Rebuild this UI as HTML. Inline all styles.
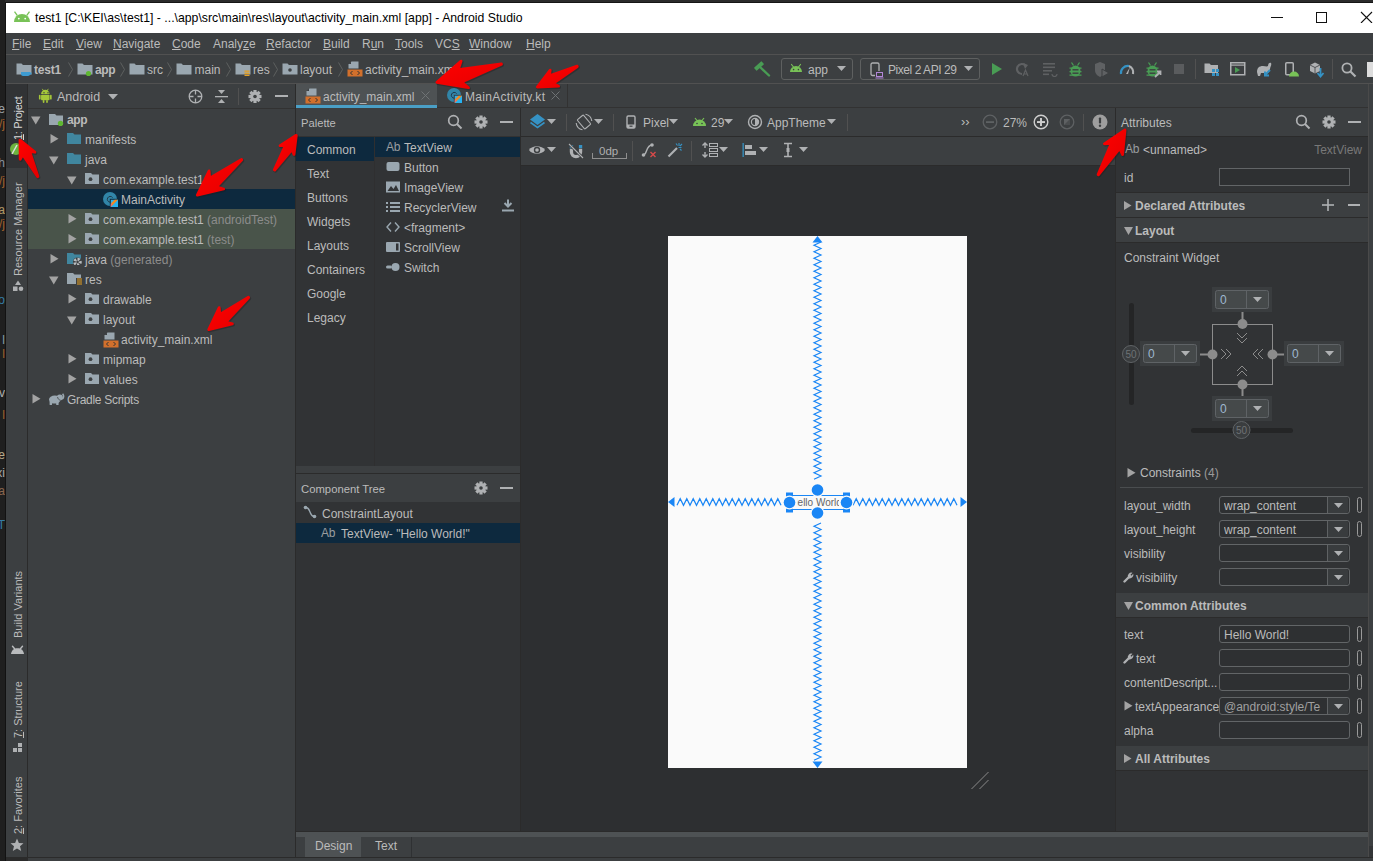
<!DOCTYPE html>
<html><head><meta charset="utf-8"><title>Android Studio</title>
<style>
html,body{margin:0;padding:0;width:1373px;height:861px;overflow:hidden;background:#2b2b2b}
body{position:relative;font-family:"Liberation Sans",sans-serif}
body>div,body>svg{position:absolute;box-sizing:content-box}
.t{white-space:nowrap}
u{text-decoration:underline;text-decoration-thickness:1px;text-underline-offset:1px}
</style></head><body>
<div style="left:0px;top:0px;width:1373px;height:861px;background:#2b2b2b;"></div>
<div style="left:5px;top:2px;width:1368px;height:1px;background:#151515;"></div>
<div style="left:5px;top:2px;width:1px;height:859px;background:#121212;"></div>
<div style="left:6px;top:3px;width:1367px;height:30px;background:#ffffff;"></div>
<svg style="left:13px;top:10px;" width="18" height="13" viewBox="0 0 18 13"><g fill="#78c257"><path d="M1,12 A8,8 0 0 1 17,12 Z"/><rect x="2.5" y="1.2" width="1.3" height="5" transform="rotate(-35 3 4)"/><rect x="14.2" y="1.2" width="1.3" height="5" transform="rotate(35 15 4)"/></g><circle cx="5.8" cy="8.6" r="0.9" fill="#fff"/><circle cx="12.2" cy="8.6" r="0.9" fill="#fff"/></svg>
<div class="t" style="left:35px;top:9.5px;font-size:12.25px;line-height:16px;color:#000000;font-weight:normal;">test1 [C:\KEI\as\test1] - ...\app\src\main\res\layout\activity_main.xml [app] - Android Studio</div>
<div style="left:1271px;top:17px;width:12px;height:1px;background:#111;"></div>
<div style="left:1316px;top:12px;width:9px;height:9px;border:1px solid #111"></div>
<svg style="left:1360px;top:11px;" width="13" height="12" viewBox="0 0 13 12"><path d="M1,1 L12,12 M12,1 L1,12" stroke="#111" stroke-width="1.1"/></svg>
<div style="left:6px;top:33px;width:1367px;height:21px;background:#3c3f41;"></div>
<div style="left:6px;top:54px;width:1367px;height:1px;background:#515151;"></div>
<div class="t" style="left:12px;top:36.0px;font-size:12px;line-height:16px;color:#bbbbbb;font-weight:normal;"><u>F</u>ile</div>
<div class="t" style="left:43px;top:36.0px;font-size:12px;line-height:16px;color:#bbbbbb;font-weight:normal;"><u>E</u>dit</div>
<div class="t" style="left:76px;top:36.0px;font-size:12px;line-height:16px;color:#bbbbbb;font-weight:normal;"><u>V</u>iew</div>
<div class="t" style="left:113px;top:36.0px;font-size:12px;line-height:16px;color:#bbbbbb;font-weight:normal;"><u>N</u>avigate</div>
<div class="t" style="left:172px;top:36.0px;font-size:12px;line-height:16px;color:#bbbbbb;font-weight:normal;"><u>C</u>ode</div>
<div class="t" style="left:213px;top:36.0px;font-size:12px;line-height:16px;color:#bbbbbb;font-weight:normal;">Analy<u>z</u>e</div>
<div class="t" style="left:266px;top:36.0px;font-size:12px;line-height:16px;color:#bbbbbb;font-weight:normal;"><u>R</u>efactor</div>
<div class="t" style="left:323px;top:36.0px;font-size:12px;line-height:16px;color:#bbbbbb;font-weight:normal;"><u>B</u>uild</div>
<div class="t" style="left:362px;top:36.0px;font-size:12px;line-height:16px;color:#bbbbbb;font-weight:normal;">R<u>u</u>n</div>
<div class="t" style="left:395px;top:36.0px;font-size:12px;line-height:16px;color:#bbbbbb;font-weight:normal;"><u>T</u>ools</div>
<div class="t" style="left:435px;top:36.0px;font-size:12px;line-height:16px;color:#bbbbbb;font-weight:normal;">VC<u>S</u></div>
<div class="t" style="left:469px;top:36.0px;font-size:12px;line-height:16px;color:#bbbbbb;font-weight:normal;"><u>W</u>indow</div>
<div class="t" style="left:526px;top:36.0px;font-size:12px;line-height:16px;color:#bbbbbb;font-weight:normal;"><u>H</u>elp</div>
<div style="left:6px;top:55px;width:1367px;height:28px;background:#3c3f41;"></div>
<div style="left:6px;top:83px;width:1367px;height:1px;background:#515151;"></div>
<svg style="left:16px;top:62px;" width="16" height="15" viewBox="0 0 16 15"><path d="M0.5,1.5 h5 l1.5,1.5 h8.5 v9.5 h-15 Z" fill="#9aa7b0"/><path d="M5,10 h9 v2 a2,2 0 0 1 -2,2 h-5 a2,2 0 0 1 -2,-2 Z" fill="#3d9bd1"/><rect x="13" y="10.5" width="2.5" height="2" fill="#3d9bd1"/></svg>
<div class="t" style="left:34px;top:61.5px;font-size:12px;line-height:16px;color:#bbbbbb;font-weight:bold;letter-spacing:-0.2px">test1</div>
<svg style="left:77px;top:62px;" width="16" height="15" viewBox="0 0 16 15"><path d="M0.5,1.5 h5 l1.5,1.5 h8.5 v9.5 h-15 Z" fill="#9aa7b0"/><circle cx="11.5" cy="11.5" r="2.6" fill="#5fb832"/></svg>
<div class="t" style="left:95px;top:61.5px;font-size:12px;line-height:16px;color:#bbbbbb;font-weight:bold;letter-spacing:-0.4px">app</div>
<svg style="left:129px;top:62px;" width="16" height="15" viewBox="0 0 16 15"><path d="M0.5,1.5 h5 l1.5,1.5 h8.5 v9.5 h-15 Z" fill="#9aa7b0"/></svg>
<div class="t" style="left:147px;top:61.5px;font-size:12px;line-height:16px;color:#bbbbbb;font-weight:normal;">src</div>
<svg style="left:176px;top:62px;" width="16" height="15" viewBox="0 0 16 15"><path d="M0.5,1.5 h5 l1.5,1.5 h8.5 v9.5 h-15 Z" fill="#9aa7b0"/></svg>
<div class="t" style="left:194.5px;top:61.5px;font-size:12px;line-height:16px;color:#bbbbbb;font-weight:normal;">main</div>
<svg style="left:235px;top:62px;" width="16" height="15" viewBox="0 0 16 15"><path d="M0.5,1.5 h5 l1.5,1.5 h8.5 v9.5 h-15 Z" fill="#9aa7b0"/><g fill="#e6a020"><rect x="9.5" y="8.5" width="5" height="1.3"/><rect x="9.5" y="10.6" width="5" height="1.3"/><rect x="9.5" y="12.7" width="5" height="1.3"/></g></svg>
<div class="t" style="left:253px;top:61.5px;font-size:12px;line-height:16px;color:#bbbbbb;font-weight:normal;">res</div>
<svg style="left:282px;top:62px;" width="16" height="15" viewBox="0 0 16 15"><path d="M0.5,1.5 h5 l1.5,1.5 h8.5 v9.5 h-15 Z" fill="#9aa7b0"/><circle cx="8" cy="8" r="1.8" fill="#3c3f41"/></svg>
<div class="t" style="left:300px;top:61.5px;font-size:12px;line-height:16px;color:#bbbbbb;font-weight:normal;">layout</div>
<svg style="left:347px;top:61px;" width="16" height="16" viewBox="0 0 16 16"><g transform="translate(0.5,0.5)"><path d="M4,0 h7 v7 h-10 v-4 Z" fill="#9aa7b0"/><path d="M1,2.5 L3.5,0 V2.5 Z" fill="#3c3f41"/><rect x="0" y="8" width="15" height="7" fill="#d2702c"/><path d="M5,9.5 l-2,2 l2,2 M10,9.5 l2,2 l-2,2" stroke="#333" stroke-width="1" fill="none"/></g></svg>
<div class="t" style="left:365px;top:61.5px;font-size:12px;line-height:16px;color:#bbbbbb;font-weight:normal;">activity_main.xml</div>
<svg style="left:67.5px;top:62px;" width="6" height="15" viewBox="0 0 6 15"><path d="M0.5,0.5 L4.5,7.5 L0.5,14.5" stroke="#5e6060" fill="none" stroke-width="1"/></svg>
<svg style="left:119.5px;top:62px;" width="6" height="15" viewBox="0 0 6 15"><path d="M0.5,0.5 L4.5,7.5 L0.5,14.5" stroke="#5e6060" fill="none" stroke-width="1"/></svg>
<svg style="left:167px;top:62px;" width="6" height="15" viewBox="0 0 6 15"><path d="M0.5,0.5 L4.5,7.5 L0.5,14.5" stroke="#5e6060" fill="none" stroke-width="1"/></svg>
<svg style="left:225.5px;top:62px;" width="6" height="15" viewBox="0 0 6 15"><path d="M0.5,0.5 L4.5,7.5 L0.5,14.5" stroke="#5e6060" fill="none" stroke-width="1"/></svg>
<svg style="left:272.5px;top:62px;" width="6" height="15" viewBox="0 0 6 15"><path d="M0.5,0.5 L4.5,7.5 L0.5,14.5" stroke="#5e6060" fill="none" stroke-width="1"/></svg>
<svg style="left:338px;top:62px;" width="6" height="15" viewBox="0 0 6 15"><path d="M0.5,0.5 L4.5,7.5 L0.5,14.5" stroke="#5e6060" fill="none" stroke-width="1"/></svg>
<svg style="left:753px;top:60px;" width="18" height="17" viewBox="0 0 18 17"><path d="M7,7 L16,15.5" stroke="#499c54" stroke-width="2.4" stroke-linecap="round"/><rect x="1" y="4" width="10" height="4" rx="0.5" transform="rotate(-42 6 6)" fill="#499c54"/></svg>
<div style="left:781px;top:58px;width:70px;height:20px;border:1px solid #5e6060;border-radius:3px"></div>
<svg style="left:789px;top:63px;" width="14" height="10" viewBox="0 0 14 10"><path d="M1,9 A6,6 0 0 1 13,9 Z" fill="#78c257"/><path d="M2.5,1.5 L4.5,4 M11.5,1.5 L9.5,4" stroke="#78c257" stroke-width="1.2" stroke-linecap="round"/><circle cx="4.6" cy="6.6" r="0.8" fill="#3c3f41"/><circle cx="9.4" cy="6.6" r="0.8" fill="#3c3f41"/></svg>
<div class="t" style="left:808px;top:61.5px;font-size:12px;line-height:16px;color:#bbbbbb;font-weight:normal;">app</div>
<svg style="left:837px;top:66px;" width="9" height="5" viewBox="0 0 9 5"><path d="M0,0 H9 L4.5,5 Z" fill="#afb1b3"/></svg>
<div style="left:860px;top:58px;width:118px;height:20px;border:1px solid #5e6060;border-radius:3px"></div>
<svg style="left:870px;top:62px;" width="15" height="17" viewBox="0 0 15 17"><rect x="1" y="1" width="8" height="12.5" rx="1.5" fill="none" stroke="#afb1b3" stroke-width="1.3"/><rect x="5" y="9" width="9" height="8" fill="#3c3f41"/><rect x="6.5" y="10.5" width="6" height="4" fill="none" stroke="#b287d9" stroke-width="1"/><rect x="5.5" y="15.5" width="8" height="1" fill="#b287d9"/></svg>
<div class="t" style="left:888px;top:61.5px;font-size:12px;line-height:16px;color:#bbbbbb;font-weight:normal;letter-spacing:-0.45px">Pixel 2 API 29</div>
<svg style="left:964px;top:66px;" width="9" height="5" viewBox="0 0 9 5"><path d="M0,0 H9 L4.5,5 Z" fill="#afb1b3"/></svg>
<svg style="left:992px;top:63px;" width="11" height="12" viewBox="0 0 11 12"><path d="M0,0 L10,6 L0,12 Z" fill="#499c54"/></svg>
<svg style="left:1015px;top:62px;" width="15" height="15" viewBox="0 0 15 15"><path d="M11,4 A5,5 0 1 0 7,12" stroke="#5f6163" stroke-width="2.2" fill="none"/><path d="M8,1 L13,3 L10,7 Z" fill="#5f6163"/><path d="M8,14 L10.5,8 L13,14 M9,12 h3" stroke="#5f6163" stroke-width="1.2" fill="none"/></svg>
<svg style="left:1043px;top:63px;" width="16" height="14" viewBox="0 0 16 14"><g fill="#5f6163"><rect x="0" y="0" width="12" height="1.6"/><rect x="0" y="3.5" width="12" height="1.6"/><rect x="0" y="7" width="9" height="1.6"/><rect x="0" y="10.5" width="6" height="1.6"/></g><path d="M9,11 a2.5,2.5 0 1 0 5,0" stroke="#5f6163" fill="none" stroke-width="1.2"/></svg>
<svg style="left:1069px;top:62px;" width="13" height="15" viewBox="0 0 13 15"><g transform="translate(0.5,0.5)" fill="#499c54"><ellipse cx="6" cy="8.5" rx="5" ry="5.5"/><rect x="0" y="5" width="12" height="1.3"/><rect x="0" y="8.5" width="12" height="1.3"/><rect x="0" y="12" width="12" height="1.3"/><path d="M2,0 L4,3 M10,0 L8,3" stroke="#499c54" stroke-width="1.3"/></g><g transform="translate(0.5,0.5)" fill="#3c3f41"><rect x="3" y="6.6" width="6" height="1.4"/><rect x="3" y="10" width="6" height="1.4"/></g></svg>
<svg style="left:1094px;top:62px;" width="16" height="16" viewBox="0 0 16 16"><path d="M1,2 L6,0 L11,2 V8 C11,12 8,14 6,15 C4,14 1,12 1,8 Z" fill="#5f6163"/><path d="M8,7 L15,11 L8,15 Z" fill="#5f6163" stroke="#3c3f41" stroke-width="1"/></svg>
<svg style="left:1119px;top:62px;" width="16" height="13" viewBox="0 0 16 13"><path d="M2,12 A7,7 0 0 1 10,4" stroke="#3592c4" stroke-width="2.2" fill="none"/><path d="M10,4 A7,7 0 0 1 14,12" stroke="#afb1b3" stroke-width="2.2" fill="none"/><path d="M7,12 L11,5 L9,12 Z" fill="#afb1b3"/></svg>
<svg style="left:1146px;top:62px;" width="17" height="17" viewBox="0 0 17 17"><g transform="translate(0.5,0.5)" fill="#499c54"><ellipse cx="6" cy="8.5" rx="5" ry="5.5"/><rect x="0" y="5" width="12" height="1.3"/><rect x="0" y="8.5" width="12" height="1.3"/><rect x="0" y="12" width="12" height="1.3"/><path d="M2,0 L4,3 M10,0 L8,3" stroke="#499c54" stroke-width="1.3"/></g><g transform="translate(0.5,0.5)" fill="#3c3f41"><rect x="3" y="6.6" width="6" height="1.4"/><rect x="3" y="10" width="6" height="1.4"/></g><path d="M9,15 L14,10 M11,9.5 H14.5 V13" stroke="#afb1b3" stroke-width="1.8" fill="none"/><rect x="8" y="9" width="9" height="8" fill="none"/></svg>
<div style="left:1174px;top:64px;width:10px;height:10px;background:#5a5c5e;"></div>
<div style="left:1195px;top:59px;width:1px;height:20px;background:#515151;"></div>
<svg style="left:1204px;top:63px;" width="16" height="14" viewBox="0 0 16 14"><path d="M0.5,0.5 h5 l1.5,1.5 h7 v8 h-13.5 Z" fill="#afb1b3"/><g fill="#3592c4"><rect x="8" y="6" width="3" height="3"/><rect x="12" y="6" width="3" height="3"/><rect x="8" y="10" width="3" height="3"/><rect x="12" y="10" width="3" height="3"/></g></svg>
<svg style="left:1230px;top:62px;" width="16" height="14" viewBox="0 0 16 14"><rect x="0.75" y="0.75" width="14" height="12" fill="none" stroke="#afb1b3" stroke-width="1.5"/><rect x="1" y="2.5" width="14" height="1.2" fill="#afb1b3"/><path d="M5,5 L10,8 L5,11 Z" fill="#499c54"/></svg>
<svg style="left:1256px;top:62px;" width="17" height="16" viewBox="0 0 17 16"><path d="M1,10 C1,6 3,4 7,4 C9,4 11,5 12,4 C12,1 14,0 15,1 C16,3 14,5 14,7 C14,9 12,11 11,11 L10,14 H8 L8,11 H5 L4,14 H2 Z" fill="#afb1b3"/><path d="M14,8 L9,13 M9,9.5 V13.5 H13" stroke="#3592c4" stroke-width="2" fill="none"/></svg>
<svg style="left:1285px;top:62px;" width="14" height="16" viewBox="0 0 14 16"><rect x="0.75" y="0.75" width="7.5" height="12" rx="1" fill="none" stroke="#afb1b3" stroke-width="1.5"/><path d="M4,14.5 A5,5 0 0 1 14,14.5 Z" fill="#78c257"/></svg>
<svg style="left:1309px;top:62px;" width="16" height="16" viewBox="0 0 16 16"><path d="M1,3 L6,0.5 L11,3 V9 L6,11.5 L1,9 Z" fill="#afb1b3"/><path d="M1,3 L6,5.5 L11,3 M6,5.5 V11.5" stroke="#3c3f41" stroke-width="0.8" fill="none"/><path d="M11.5,6 V14 M8.5,11 L11.5,14.5 L14.5,11" stroke="#3592c4" stroke-width="1.8" fill="none"/></svg>
<div style="left:1332px;top:59px;width:1px;height:20px;background:#515151;"></div>
<svg style="left:1341px;top:62px;" width="16" height="16" viewBox="0 0 16 16"><circle cx="6" cy="6" r="4.6" stroke="#afb1b3" stroke-width="1.8" fill="none"/><path d="M9.5,9.5 L14.5,14.5" stroke="#afb1b3" stroke-width="2.2"/></svg>
<div style="left:1367px;top:62px;width:6px;height:15px;background:#dddddd;"></div>
<div style="left:0px;top:0px;width:5px;height:861px;background:#1f1f1f;"></div>
<div style="left:0;top:0;width:5px;height:861px;overflow:hidden"><div class="t" style="position:absolute;right:0;top:103px;font-size:12px;line-height:12px;color:#c8d0d8;opacity:.75">re</div><div class="t" style="position:absolute;right:0;top:118px;font-size:12px;line-height:12px;color:#cc7832;opacity:.75">/j</div><div class="t" style="position:absolute;right:0;top:157px;font-size:12px;line-height:12px;color:#a9b7c6;opacity:.75">Th</div><div class="t" style="position:absolute;right:0;top:175px;font-size:12px;line-height:12px;color:#cc7832;opacity:.75">/j</div><div class="t" style="position:absolute;right:0;top:204px;font-size:12px;line-height:12px;color:#e0c080;opacity:.75">oa</div><div class="t" style="position:absolute;right:0;top:218px;font-size:12px;line-height:12px;color:#cc7832;opacity:.75">/j</div><div class="t" style="position:absolute;right:0;top:294px;font-size:12px;line-height:12px;color:#3d9bd1;opacity:.75">o</div><div class="t" style="position:absolute;right:0;top:334px;font-size:12px;line-height:12px;color:#a9c6d6;opacity:.75">l</div><div class="t" style="position:absolute;right:0;top:348px;font-size:12px;line-height:12px;color:#cc7832;opacity:.75">l</div><div class="t" style="position:absolute;right:0;top:387px;font-size:12px;line-height:12px;color:#dddddd;opacity:.75">v</div><div class="t" style="position:absolute;right:0;top:409px;font-size:12px;line-height:12px;color:#cc7832;opacity:.75">l</div><div class="t" style="position:absolute;right:0;top:449px;font-size:12px;line-height:12px;color:#e8d8b0;opacity:.75">ie</div><div class="t" style="position:absolute;right:0;top:467px;font-size:12px;line-height:12px;color:#d8d8d8;opacity:.75">xi</div><div class="t" style="position:absolute;right:0;top:485px;font-size:12px;line-height:12px;color:#b08060;opacity:.75">ra</div><div class="t" style="position:absolute;right:0;top:519px;font-size:12px;line-height:12px;color:#3d9bd1;opacity:.75">T</div></div>
<div style="left:6px;top:84px;width:21px;height:773px;background:#3c3f41;"></div>
<div style="left:6px;top:84px;width:21px;height:84px;background:#313335;"></div>
<div style="left:27px;top:84px;width:1px;height:773px;background:#2b2b2b;"></div>
<div class="t" style="left:17.7px;top:140px;font-size:11px;line-height:14px;color:#d8d8d8;transform-origin:0 0;transform:rotate(-90deg) translate(0,-7px);letter-spacing:-0.3px"><u>1</u>: Project</div>
<svg style="left:9px;top:142px;" width="14" height="14" viewBox="0 0 14 14"><circle cx="7" cy="7" r="6" fill="#6cb33e"/><path d="M3,12 L8,3" stroke="#ddd" stroke-width="1.5"/></svg>
<div class="t" style="left:17.7px;top:276px;font-size:11px;line-height:14px;color:#bbbbbb;transform-origin:0 0;transform:rotate(-90deg) translate(0,-7px);">Resource Manager</div>
<svg style="left:12px;top:280px;" width="12" height="12" viewBox="0 0 12 12"><path d="M6,0.5 L9,5 H3 Z" fill="#afb1b3"/><rect x="1" y="6.5" width="4.5" height="4.5" fill="#afb1b3"/><circle cx="9" cy="8.8" r="2.3" fill="#afb1b3"/></svg>
<div class="t" style="left:17.7px;top:638px;font-size:11px;line-height:14px;color:#bbbbbb;transform-origin:0 0;transform:rotate(-90deg) translate(0,-7px);">Build Variants</div>
<svg style="left:11px;top:645px;" width="13" height="10" viewBox="0 0 13 10"><path d="M0,9 C0.5,5.5 2.5,3.2 6.5,3.2 C10.5,3.2 12.5,5.5 13,9 Z" fill="#b9bbbd"/><path d="M1.5,1.2 L3.8,4 M11.5,1.2 L9.2,4" stroke="#b9bbbd" stroke-width="1.4" stroke-linecap="round"/></svg>
<div class="t" style="left:17.7px;top:738px;font-size:11px;line-height:14px;color:#bbbbbb;transform-origin:0 0;transform:rotate(-90deg) translate(0,-7px);"><u>7</u>: Structure</div>
<svg style="left:13px;top:743px;" width="10" height="10" viewBox="0 0 10 10"><g fill="#afb1b3"><rect x="0" y="5" width="4" height="4"/><rect x="5" y="5" width="4" height="4"/><rect x="5" y="0" width="4" height="4"/></g></svg>
<div class="t" style="left:17.7px;top:834px;font-size:11px;line-height:14px;color:#bbbbbb;transform-origin:0 0;transform:rotate(-90deg) translate(0,-7px);"><u>2</u>: Favorites</div>
<svg style="left:10px;top:838px;" width="14" height="14" viewBox="0 0 14 14"><path d="M7,0.5 L8.9,5 L13.5,5.2 L10,8.3 L11.2,13 L7,10.4 L2.8,13 L4,8.3 L0.5,5.2 L5.1,5 Z" fill="#afb1b3"/></svg>
<div style="left:28px;top:84px;width:267px;height:773px;background:#3c3f41;"></div>
<div style="left:28px;top:108px;width:267px;height:1px;background:#323232;"></div>
<div style="left:295px;top:84px;width:1px;height:773px;background:#2b2b2b;"></div>
<svg style="left:38px;top:88px;" width="16" height="18" viewBox="0 0 16 18"><g fill="#a4c639" transform="translate(0.5,0) scale(0.85)"><path d="M3,7 A5,5 0 0 1 13,7 Z"/><rect x="3" y="7.8" width="10" height="6.5" rx="1"/><rect x="0.5" y="8" width="2" height="5.5" rx="1"/><rect x="13.5" y="8" width="2" height="5.5" rx="1"/><rect x="5" y="14" width="2" height="3.5" rx="1"/><rect x="9" y="14" width="2" height="3.5" rx="1"/><path d="M4.5,1 L6,3.5 M11.5,1 L10,3.5" stroke="#a4c639" stroke-width="1"/></g><circle cx="6" cy="4.8" r="0.7" fill="#3c3f41"/><circle cx="10" cy="4.8" r="0.7" fill="#3c3f41"/></svg>
<div class="t" style="left:57px;top:88.5px;font-size:12.5px;line-height:16px;color:#bbbbbb;font-weight:normal;">Android</div>
<svg style="left:108px;top:94px;" width="10" height="6" viewBox="0 0 10 6"><path d="M0,0 H10 L5,5.5 Z" fill="#afb1b3"/></svg>
<svg style="left:188px;top:89px;" width="15" height="15" viewBox="0 0 15 15"><circle cx="7.5" cy="7.5" r="6.3" stroke="#afb1b3" stroke-width="1.3" fill="none"/><path d="M7.5,1 V5.5 M7.5,9.5 V14 M1,7.5 H5.5 M9.5,7.5 H14" stroke="#afb1b3" stroke-width="1.3"/></svg>
<svg style="left:214px;top:89px;" width="15" height="15" viewBox="0 0 15 15"><rect x="1" y="7" width="13" height="1.3" fill="#afb1b3"/><path d="M4,1 L11,1 L7.5,5 Z M4,14 L11,14 L7.5,10 Z" fill="#afb1b3"/></svg>
<div style="left:238px;top:88px;width:1px;height:17px;background:#515151;"></div>
<svg style="left:247px;top:89px;" width="16" height="16" viewBox="0 0 16 16"><g fill="#afb1b3"><rect x="6.4" y="1.0" width="3.2" height="3" transform="rotate(0 8 7.5)"/><rect x="6.4" y="1.0" width="3.2" height="3" transform="rotate(45 8 7.5)"/><rect x="6.4" y="1.0" width="3.2" height="3" transform="rotate(90 8 7.5)"/><rect x="6.4" y="1.0" width="3.2" height="3" transform="rotate(135 8 7.5)"/><rect x="6.4" y="1.0" width="3.2" height="3" transform="rotate(180 8 7.5)"/><rect x="6.4" y="1.0" width="3.2" height="3" transform="rotate(225 8 7.5)"/><rect x="6.4" y="1.0" width="3.2" height="3" transform="rotate(270 8 7.5)"/><rect x="6.4" y="1.0" width="3.2" height="3" transform="rotate(315 8 7.5)"/><circle cx="8" cy="7.5" r="4.7"/></g><circle cx="8" cy="7.5" r="1.8" fill="#3c3f41"/></svg>
<div style="left:275px;top:95px;width:13px;height:2px;background:#afb1b3;"></div>
<div style="left:28px;top:189px;width:267px;height:20px;background:#0d293e;"></div>
<div style="left:28px;top:209px;width:267px;height:20px;background:#49544a;"></div>
<div style="left:28px;top:229px;width:267px;height:20px;background:#49544a;"></div>
<svg style="left:31px;top:116px;" width="10" height="9" viewBox="0 0 10 9"><path d="M0,0.5 H9.5 L4.75,8.5 Z" fill="#a3a3a3"/></svg>
<svg style="left:49px;top:114px;" width="15" height="12" viewBox="0 0 15 12"><path d="M0,0 H6 L7.5,1.5 H14 V11 H0 Z" fill="#9aa7b0"/><circle cx="11.5" cy="9.5" r="2.7" fill="#5fb832"/></svg>
<div class="t" style="left:67px;top:109.84px;font-size:12px;line-height:20px;color:#bbbbbb;font-weight:normal;"><b style="letter-spacing:-0.4px">app</b></div>
<svg style="left:50px;top:134px;" width="9" height="10" viewBox="0 0 9 10"><path d="M0.5,0 V9.5 L8.5,4.75 Z" fill="#a3a3a3"/></svg>
<svg style="left:67px;top:133px;" width="15" height="12" viewBox="0 0 15 12"><path d="M0,0 H6 L7.5,1.5 H14 V11 H0 Z" fill="#40869f"/></svg>
<div class="t" style="left:85px;top:129.84px;font-size:12px;line-height:20px;color:#bbbbbb;font-weight:normal;">manifests</div>
<svg style="left:49px;top:156px;" width="10" height="9" viewBox="0 0 10 9"><path d="M0,0.5 H9.5 L4.75,8.5 Z" fill="#a3a3a3"/></svg>
<svg style="left:67px;top:153px;" width="15" height="12" viewBox="0 0 15 12"><path d="M0,0 H6 L7.5,1.5 H14 V11 H0 Z" fill="#40869f"/></svg>
<div class="t" style="left:85px;top:149.84px;font-size:12px;line-height:20px;color:#bbbbbb;font-weight:normal;">java</div>
<svg style="left:67px;top:176px;" width="10" height="9" viewBox="0 0 10 9"><path d="M0,0.5 H9.5 L4.75,8.5 Z" fill="#a3a3a3"/></svg>
<svg style="left:85px;top:173px;" width="15" height="12" viewBox="0 0 15 12"><path d="M0,0 H6 L7.5,1.5 H14 V11 H0 Z" fill="#9aa7b0"/><circle cx="5.5" cy="6.2" r="1.9" fill="#3c3f41"/></svg>
<div class="t" style="left:103px;top:169.84px;font-size:12px;line-height:20px;color:#bbbbbb;font-weight:normal;">com.example.test1</div>
<svg style="left:103px;top:192px;" width="17" height="16" viewBox="0 0 17 16"><circle cx="7" cy="7" r="7" fill="#3185a8"/><path d="M9.6,5.6 A2.9,2.9 0 1 0 7.2,10.2" stroke="#1f3a4a" stroke-width="1" fill="none"/><rect x="6.8" y="6.8" width="9" height="9" fill="#0d293e"/><rect x="7.8" y="7.8" width="7.2" height="7.2" fill="#26b3f2"/><path d="M7.8,15 V11.6 L11.6,7.8 H15 Z" fill="#f18a1f"/><path d="M7.8,15 V12.6 L9.6,11.2 Z" fill="#e060a8"/></svg>
<div class="t" style="left:121px;top:189.84px;font-size:12px;line-height:20px;color:#bbbbbb;font-weight:normal;">MainActivity</div>
<svg style="left:68px;top:214px;" width="9" height="10" viewBox="0 0 9 10"><path d="M0.5,0 V9.5 L8.5,4.75 Z" fill="#a3a3a3"/></svg>
<svg style="left:85px;top:213px;" width="15" height="12" viewBox="0 0 15 12"><path d="M0,0 H6 L7.5,1.5 H14 V11 H0 Z" fill="#9aa7b0"/><circle cx="5.5" cy="6.2" r="1.9" fill="#3c3f41"/></svg>
<div class="t" style="left:103px;top:209.84px;font-size:12px;line-height:20px;color:#bbbbbb;font-weight:normal;">com.example.test1 <span style="color:#8c8c8c">(androidTest)</span></div>
<svg style="left:68px;top:234px;" width="9" height="10" viewBox="0 0 9 10"><path d="M0.5,0 V9.5 L8.5,4.75 Z" fill="#a3a3a3"/></svg>
<svg style="left:85px;top:233px;" width="15" height="12" viewBox="0 0 15 12"><path d="M0,0 H6 L7.5,1.5 H14 V11 H0 Z" fill="#9aa7b0"/><circle cx="5.5" cy="6.2" r="1.9" fill="#3c3f41"/></svg>
<div class="t" style="left:103px;top:229.84px;font-size:12px;line-height:20px;color:#bbbbbb;font-weight:normal;">com.example.test1 <span style="color:#8c8c8c">(test)</span></div>
<svg style="left:50px;top:254px;" width="9" height="10" viewBox="0 0 9 10"><path d="M0.5,0 V9.5 L8.5,4.75 Z" fill="#a3a3a3"/></svg>
<svg style="left:67px;top:253px;" width="15" height="12" viewBox="0 0 15 12"><path d="M0,0 H6 L7.5,1.5 H14 V11 H0 Z" fill="#40869f"/><circle cx="10.5" cy="9" r="4.6" fill="#3c3f41"/><g fill="#b8bcbf"><path d="M10.5,9 L10.5,4.8 A4.2,4.2 0 0 1 13.5,6 Z" transform="rotate(0 10.5 9)"/><path d="M10.5,9 L10.5,4.8 A4.2,4.2 0 0 1 13.5,6 Z" transform="rotate(72 10.5 9)"/><path d="M10.5,9 L10.5,4.8 A4.2,4.2 0 0 1 13.5,6 Z" transform="rotate(144 10.5 9)"/><path d="M10.5,9 L10.5,4.8 A4.2,4.2 0 0 1 13.5,6 Z" transform="rotate(216 10.5 9)"/><path d="M10.5,9 L10.5,4.8 A4.2,4.2 0 0 1 13.5,6 Z" transform="rotate(288 10.5 9)"/></g><circle cx="10.5" cy="9" r="1.1" fill="#3c3f41"/></svg>
<div class="t" style="left:85px;top:249.84px;font-size:12px;line-height:20px;color:#bbbbbb;font-weight:normal;">java <span style="color:#8c8c8c">(generated)</span></div>
<svg style="left:49px;top:276px;" width="10" height="9" viewBox="0 0 10 9"><path d="M0,0.5 H9.5 L4.75,8.5 Z" fill="#a3a3a3"/></svg>
<svg style="left:67px;top:273px;" width="15" height="12" viewBox="0 0 15 12"><path d="M0,0 H6 L7.5,1.5 H14 V11 H0 Z" fill="#9aa7b0"/><rect x="9" y="5" width="7" height="8" fill="#3c3f41"/><g fill="#e6a020"><rect x="10" y="5.5" width="6" height="1"/><rect x="10" y="7.5" width="6" height="1"/><rect x="10" y="9.5" width="6" height="1"/><rect x="10" y="11.5" width="6" height="1"/></g></svg>
<div class="t" style="left:85px;top:269.84px;font-size:12px;line-height:20px;color:#bbbbbb;font-weight:normal;">res</div>
<svg style="left:68px;top:294px;" width="9" height="10" viewBox="0 0 9 10"><path d="M0.5,0 V9.5 L8.5,4.75 Z" fill="#a3a3a3"/></svg>
<svg style="left:85px;top:293px;" width="15" height="12" viewBox="0 0 15 12"><path d="M0,0 H6 L7.5,1.5 H14 V11 H0 Z" fill="#9aa7b0"/><circle cx="5.5" cy="6.2" r="1.9" fill="#3c3f41"/></svg>
<div class="t" style="left:103px;top:289.84px;font-size:12px;line-height:20px;color:#bbbbbb;font-weight:normal;">drawable</div>
<svg style="left:67px;top:316px;" width="10" height="9" viewBox="0 0 10 9"><path d="M0,0.5 H9.5 L4.75,8.5 Z" fill="#a3a3a3"/></svg>
<svg style="left:85px;top:313px;" width="15" height="12" viewBox="0 0 15 12"><path d="M0,0 H6 L7.5,1.5 H14 V11 H0 Z" fill="#9aa7b0"/><circle cx="5.5" cy="6.2" r="1.9" fill="#3c3f41"/></svg>
<div class="t" style="left:103px;top:309.84px;font-size:12px;line-height:20px;color:#bbbbbb;font-weight:normal;">layout</div>
<svg style="left:103px;top:332px;" width="16" height="16" viewBox="0 0 16 16"><g transform="translate(0.5,0.5)"><path d="M4,0 h7 v7 h-10 v-4 Z" fill="#9aa7b0"/><path d="M1,2.5 L3.5,0 V2.5 Z" fill="#3c3f41"/><rect x="0" y="8" width="15" height="7" fill="#d2702c"/><path d="M5,9.5 l-2,2 l2,2 M10,9.5 l2,2 l-2,2" stroke="#333" stroke-width="1" fill="none"/></g></svg>
<div class="t" style="left:121px;top:329.84px;font-size:12px;line-height:20px;color:#bbbbbb;font-weight:normal;">activity_main.xml</div>
<svg style="left:68px;top:354px;" width="9" height="10" viewBox="0 0 9 10"><path d="M0.5,0 V9.5 L8.5,4.75 Z" fill="#a3a3a3"/></svg>
<svg style="left:85px;top:353px;" width="15" height="12" viewBox="0 0 15 12"><path d="M0,0 H6 L7.5,1.5 H14 V11 H0 Z" fill="#9aa7b0"/><circle cx="5.5" cy="6.2" r="1.9" fill="#3c3f41"/></svg>
<div class="t" style="left:103px;top:349.84px;font-size:12px;line-height:20px;color:#bbbbbb;font-weight:normal;">mipmap</div>
<svg style="left:68px;top:374px;" width="9" height="10" viewBox="0 0 9 10"><path d="M0.5,0 V9.5 L8.5,4.75 Z" fill="#a3a3a3"/></svg>
<svg style="left:85px;top:373px;" width="15" height="12" viewBox="0 0 15 12"><path d="M0,0 H6 L7.5,1.5 H14 V11 H0 Z" fill="#9aa7b0"/><circle cx="5.5" cy="6.2" r="1.9" fill="#3c3f41"/></svg>
<div class="t" style="left:103px;top:369.84px;font-size:12px;line-height:20px;color:#bbbbbb;font-weight:normal;">values</div>
<svg style="left:32px;top:394px;" width="9" height="10" viewBox="0 0 9 10"><path d="M0.5,0 V9.5 L8.5,4.75 Z" fill="#a3a3a3"/></svg>
<svg style="left:48px;top:393px;" width="17" height="13" viewBox="0 0 17 13"><g fill="#9aa7b0"><ellipse cx="6.8" cy="6.6" rx="5.8" ry="4"/><circle cx="11.8" cy="4.6" r="3"/><rect x="1.6" y="7.5" width="2.4" height="4.5" rx="0.6"/><rect x="8.2" y="7.5" width="2.4" height="4.5" rx="0.6"/></g><path d="M14.2,6 C15.8,5 16.2,2.6 14.6,0.8" stroke="#9aa7b0" stroke-width="1.6" fill="none"/><path d="M9.5,4 C10,6 11,7 12.5,7.2" stroke="#3c3f41" stroke-width="0.8" fill="none"/></svg>
<div class="t" style="left:67px;top:389.84px;font-size:12px;line-height:20px;color:#bbbbbb;font-weight:normal;"><span style="letter-spacing:-0.3px">Gradle Scripts</span></div>
<div style="left:296px;top:84px;width:1077px;height:24px;background:#3c3f41;"></div>
<div style="left:296px;top:107px;width:1077px;height:1px;background:#323232;"></div>
<div style="left:296px;top:84px;width:141px;height:21px;background:#4e5254;"></div>
<div style="left:296px;top:105px;width:141px;height:3px;background:#4a9fc6;"></div>
<svg style="left:305px;top:88px;" width="16" height="16" viewBox="0 0 16 16"><g transform="translate(0.5,0.5)"><path d="M4,0 h7 v7 h-10 v-4 Z" fill="#9aa7b0"/><path d="M1,2.5 L3.5,0 V2.5 Z" fill="#3c3f41"/><rect x="0" y="8" width="15" height="7" fill="#d2702c"/><path d="M5,9.5 l-2,2 l2,2 M10,9.5 l2,2 l-2,2" stroke="#333" stroke-width="1" fill="none"/></g></svg>
<div class="t" style="left:323px;top:86.84px;font-size:12px;line-height:20px;color:#bbbbbb;font-weight:normal;">activity_main.xml</div>
<svg style="left:421px;top:91px;" width="9" height="9" viewBox="0 0 9 9"><path d="M0.5,0.5 L8.5,8.5 M8.5,0.5 L0.5,8.5" stroke="#6f7375" stroke-width="1"/></svg>
<svg style="left:447px;top:88px;" width="17" height="16" viewBox="0 0 17 16"><circle cx="7" cy="7" r="7" fill="#3185a8"/><path d="M9.6,5.6 A2.9,2.9 0 1 0 7.2,10.2" stroke="#1f3a4a" stroke-width="1" fill="none"/><rect x="6.8" y="6.8" width="9" height="9" fill="#3c3f41"/><rect x="7.8" y="7.8" width="7.2" height="7.2" fill="#26b3f2"/><path d="M7.8,15 V11.6 L11.6,7.8 H15 Z" fill="#f18a1f"/><path d="M7.8,15 V12.6 L9.6,11.2 Z" fill="#e060a8"/></svg>
<div class="t" style="left:465px;top:86.84px;font-size:12px;line-height:20px;color:#bbbbbb;font-weight:normal;letter-spacing:0.3px">MainActivity.kt</div>
<svg style="left:551px;top:91px;" width="9" height="9" viewBox="0 0 9 9"><path d="M0.5,0.5 L8.5,8.5 M8.5,0.5 L0.5,8.5" stroke="#6f7375" stroke-width="1"/></svg>
<div style="left:567px;top:84px;width:1px;height:23px;background:#323232;"></div>
<div style="left:296px;top:108px;width:224px;height:358px;background:#313335;"></div>
<div style="left:296px;top:108px;width:224px;height:28px;background:#3c3f41;"></div>
<div style="left:296px;top:136px;width:224px;height:1px;background:#323232;"></div>
<div style="left:520px;top:108px;width:1px;height:723px;background:#2b2b2b;"></div>
<div class="t" style="left:301px;top:113.12px;font-size:11.2px;line-height:20px;color:#bbbbbb;font-weight:normal;">Palette</div>
<svg style="left:447px;top:114px;" width="16" height="16" viewBox="0 0 16 16"><circle cx="6.5" cy="6.5" r="4.8" stroke="#afb1b3" stroke-width="1.7" fill="none"/><path d="M10,10 L14.5,14.5" stroke="#afb1b3" stroke-width="2"/></svg>
<svg style="left:473px;top:114px;" width="16" height="16" viewBox="0 0 16 16"><g fill="#afb1b3"><rect x="6.4" y="1.5" width="3.2" height="3" transform="rotate(0 8 8)"/><rect x="6.4" y="1.5" width="3.2" height="3" transform="rotate(45 8 8)"/><rect x="6.4" y="1.5" width="3.2" height="3" transform="rotate(90 8 8)"/><rect x="6.4" y="1.5" width="3.2" height="3" transform="rotate(135 8 8)"/><rect x="6.4" y="1.5" width="3.2" height="3" transform="rotate(180 8 8)"/><rect x="6.4" y="1.5" width="3.2" height="3" transform="rotate(225 8 8)"/><rect x="6.4" y="1.5" width="3.2" height="3" transform="rotate(270 8 8)"/><rect x="6.4" y="1.5" width="3.2" height="3" transform="rotate(315 8 8)"/><circle cx="8" cy="8" r="4.7"/></g><circle cx="8" cy="8" r="1.8" fill="#3c3f41"/></svg>
<div style="left:500px;top:121px;width:13px;height:2px;background:#afb1b3;"></div>
<div style="left:296px;top:137px;width:78px;height:24px;background:#0d293e;"></div>
<div style="left:374px;top:137px;width:1px;height:329px;background:#2f2f30;"></div>
<div class="t" style="left:307px;top:139.84px;font-size:12px;line-height:20px;color:#bbbbbb;font-weight:normal;">Common</div>
<div class="t" style="left:307px;top:163.84px;font-size:12px;line-height:20px;color:#bbbbbb;font-weight:normal;">Text</div>
<div class="t" style="left:307px;top:187.84px;font-size:12px;line-height:20px;color:#bbbbbb;font-weight:normal;">Buttons</div>
<div class="t" style="left:307px;top:211.84px;font-size:12px;line-height:20px;color:#bbbbbb;font-weight:normal;">Widgets</div>
<div class="t" style="left:307px;top:235.84px;font-size:12px;line-height:20px;color:#bbbbbb;font-weight:normal;">Layouts</div>
<div class="t" style="left:307px;top:259.84px;font-size:12px;line-height:20px;color:#bbbbbb;font-weight:normal;">Containers</div>
<div class="t" style="left:307px;top:283.84px;font-size:12px;line-height:20px;color:#bbbbbb;font-weight:normal;">Google</div>
<div class="t" style="left:307px;top:307.84px;font-size:12px;line-height:20px;color:#bbbbbb;font-weight:normal;">Legacy</div>
<div style="left:375px;top:137px;width:145px;height:20px;background:#0d293e;"></div>
<div class="t" style="left:404px;top:137.84px;font-size:12px;line-height:20px;color:#bbbbbb;font-weight:normal;">TextView</div>
<div class="t" style="left:404px;top:157.84px;font-size:12px;line-height:20px;color:#bbbbbb;font-weight:normal;">Button</div>
<div class="t" style="left:404px;top:177.84px;font-size:12px;line-height:20px;color:#bbbbbb;font-weight:normal;">ImageView</div>
<div class="t" style="left:404px;top:197.84px;font-size:12px;line-height:20px;color:#bbbbbb;font-weight:normal;">RecyclerView</div>
<div class="t" style="left:404px;top:217.84px;font-size:12px;line-height:20px;color:#bbbbbb;font-weight:normal;">&lt;fragment&gt;</div>
<div class="t" style="left:404px;top:237.84px;font-size:12px;line-height:20px;color:#bbbbbb;font-weight:normal;">ScrollView</div>
<div class="t" style="left:404px;top:257.84px;font-size:12px;line-height:20px;color:#bbbbbb;font-weight:normal;">Switch</div>
<div class="t" style="left:386px;top:136.84px;font-size:12px;line-height:20px;color:#9a9da0;font-weight:normal;letter-spacing:-0.3px">Ab</div>
<svg style="left:386px;top:161px;" width="14" height="12" viewBox="0 0 14 12"><rect x="0.5" y="1" width="13" height="9" rx="2" fill="#9aa7b0"/></svg>
<svg style="left:386px;top:181px;" width="14" height="12" viewBox="0 0 14 12"><rect x="0" y="0.5" width="14" height="11" fill="#9aa7b0"/><path d="M1.5,10 L5,5 L7.5,8 L10,4 L13,10 Z" fill="#313335"/></svg>
<svg style="left:386px;top:201px;" width="14" height="12" viewBox="0 0 14 12"><g fill="#9aa7b0"><rect x="0" y="1" width="2" height="2"/><rect x="0" y="5" width="2" height="2"/><rect x="0" y="9" width="2" height="2"/><rect x="4" y="1" width="10" height="2"/><rect x="4" y="5" width="10" height="2"/><rect x="4" y="9" width="10" height="2"/></g></svg>
<svg style="left:386px;top:221px;" width="14" height="12" viewBox="0 0 14 12"><path d="M5,1.5 L1,6 L5,10.5 M9,1.5 L13,6 L9,10.5" stroke="#9aa7b0" stroke-width="1.4" fill="none"/></svg>
<svg style="left:386px;top:241px;" width="14" height="12" viewBox="0 0 14 12"><rect x="0" y="1" width="14" height="10" rx="1" fill="#9aa7b0"/><rect x="10" y="2.5" width="2.5" height="7" fill="#313335"/></svg>
<svg style="left:386px;top:261px;" width="14" height="12" viewBox="0 0 14 12"><rect x="0" y="4.5" width="6" height="3" rx="1.5" fill="#9aa7b0"/><circle cx="9.5" cy="6" r="4" fill="#9aa7b0"/></svg>
<svg style="left:501px;top:199px;" width="14" height="14" viewBox="0 0 14 14"><path d="M7,0.5 V7 M3.5,4 L7,7.5 L10.5,4" stroke="#9aa7b0" stroke-width="2" fill="none"/><rect x="1" y="10.5" width="12" height="2" fill="#9aa7b0"/></svg>
<div style="left:296px;top:466px;width:224px;height:7px;background:#3c3f41;"></div>
<div style="left:296px;top:473px;width:224px;height:1px;background:#2b2b2b;"></div>
<div style="left:296px;top:474px;width:224px;height:28px;background:#3c3f41;"></div>
<div style="left:296px;top:502px;width:224px;height:329px;background:#313335;"></div>
<div class="t" style="left:301px;top:479.08px;font-size:11.3px;line-height:20px;color:#bbbbbb;font-weight:normal;">Component Tree</div>
<svg style="left:473px;top:480px;" width="16" height="16" viewBox="0 0 16 16"><g fill="#afb1b3"><rect x="6.4" y="1.5" width="3.2" height="3" transform="rotate(0 8 8)"/><rect x="6.4" y="1.5" width="3.2" height="3" transform="rotate(45 8 8)"/><rect x="6.4" y="1.5" width="3.2" height="3" transform="rotate(90 8 8)"/><rect x="6.4" y="1.5" width="3.2" height="3" transform="rotate(135 8 8)"/><rect x="6.4" y="1.5" width="3.2" height="3" transform="rotate(180 8 8)"/><rect x="6.4" y="1.5" width="3.2" height="3" transform="rotate(225 8 8)"/><rect x="6.4" y="1.5" width="3.2" height="3" transform="rotate(270 8 8)"/><rect x="6.4" y="1.5" width="3.2" height="3" transform="rotate(315 8 8)"/><circle cx="8" cy="8" r="4.7"/></g><circle cx="8" cy="8" r="1.8" fill="#3c3f41"/></svg>
<div style="left:500px;top:487px;width:13px;height:2px;background:#afb1b3;"></div>
<svg style="left:303px;top:505px;" width="14" height="14" viewBox="0 0 14 14"><path d="M2.5,2.5 C6,2.5 6,5 7,7 C8,9 8,11.5 11.5,11.5" stroke="#9aa7b0" stroke-width="1.4" fill="none"/><circle cx="2.5" cy="2.5" r="1.8" fill="#9aa7b0"/><circle cx="11.5" cy="11.5" r="1.8" fill="#9aa7b0"/></svg>
<div class="t" style="left:322px;top:503.84px;font-size:12px;line-height:20px;color:#bbbbbb;font-weight:normal;">ConstraintLayout</div>
<div style="left:296px;top:523px;width:224px;height:20px;background:#0d293e;"></div>
<div class="t" style="left:321px;top:522.84px;font-size:12px;line-height:20px;color:#9a9da0;font-weight:normal;letter-spacing:-0.3px">Ab</div>
<div class="t" style="left:341px;top:523.84px;font-size:12px;line-height:20px;color:#bbbbbb;font-weight:normal;">TextView- "Hello World!"</div>
<div style="left:521px;top:108px;width:594px;height:28px;background:#3c3f41;"></div>
<div style="left:521px;top:136px;width:594px;height:1px;background:#2b2b2b;"></div>
<div style="left:521px;top:137px;width:594px;height:28px;background:#3c3f41;"></div>
<div style="left:521px;top:165px;width:594px;height:1px;background:#2b2b2b;"></div>
<svg style="left:529px;top:113px;" width="17" height="17" viewBox="0 0 17 17"><path d="M8.5,1 L16,6.5 L8.5,12 L1,6.5 Z" fill="#3592c4"/><path d="M1.5,9.5 L8.5,14.5 L15.5,9.5" stroke="#3592c4" stroke-width="1.6" fill="none"/></svg>
<svg style="left:547px;top:119px;" width="9" height="5" viewBox="0 0 9 5"><path d="M0,0 H9 L4.5,5 Z" fill="#afb1b3"/></svg>
<div style="left:566px;top:114px;width:1px;height:17px;background:#515151;"></div>
<svg style="left:575px;top:113px;" width="18" height="18" viewBox="0 0 18 18"><rect x="5" y="3" width="8" height="12" rx="1" transform="rotate(-40 9 9)" fill="none" stroke="#afb1b3" stroke-width="1.1"/><path d="M10.5,1.2 A7.8,7.8 0 0 1 16.8,8" stroke="#afb1b3" fill="none" stroke-width="1.1"/><path d="M7.5,16.8 A7.8,7.8 0 0 1 1.2,10" stroke="#afb1b3" fill="none" stroke-width="1.1"/></svg>
<svg style="left:594px;top:119px;" width="9" height="5" viewBox="0 0 9 5"><path d="M0,0 H9 L4.5,5 Z" fill="#afb1b3"/></svg>
<div style="left:613px;top:114px;width:1px;height:17px;background:#515151;"></div>
<svg style="left:626px;top:115px;" width="10" height="14" viewBox="0 0 10 14"><rect x="1" y="1" width="8" height="12" rx="1.2" fill="none" stroke="#afb1b3" stroke-width="1.4"/><rect x="1" y="9.5" width="8" height="3.5" fill="#afb1b3"/><rect x="3.5" y="10.6" width="3" height="1.2" fill="#3c3f41"/></svg>
<div class="t" style="left:643px;top:112.84px;font-size:12px;line-height:20px;color:#bbbbbb;font-weight:normal;">Pixel</div>
<svg style="left:669px;top:119px;" width="9" height="5" viewBox="0 0 9 5"><path d="M0,0 H9 L4.5,5 Z" fill="#afb1b3"/></svg>
<svg style="left:692px;top:117px;" width="15" height="10" viewBox="0 0 15 10"><path d="M1,9 A6.5,6.5 0 0 1 14,9 Z" fill="#78c257"/><path d="M3,1 L5,3.5 M12,1 L10,3.5" stroke="#78c257" stroke-width="1.2"/><circle cx="5" cy="6.5" r="0.8" fill="#3c3f41"/><circle cx="10" cy="6.5" r="0.8" fill="#3c3f41"/></svg>
<div class="t" style="left:711px;top:112.84px;font-size:12px;line-height:20px;color:#bbbbbb;font-weight:normal;">29</div>
<svg style="left:724px;top:119px;" width="9" height="5" viewBox="0 0 9 5"><path d="M0,0 H9 L4.5,5 Z" fill="#afb1b3"/></svg>
<svg style="left:747px;top:114px;" width="16" height="16" viewBox="0 0 16 16"><circle cx="8" cy="8" r="6.5" stroke="#afb1b3" stroke-width="1.4" fill="none"/><circle cx="8" cy="8" r="3.6" stroke="#afb1b3" stroke-width="1.2" fill="none"/><path d="M8,4.4 A3.6,3.6 0 0 1 8,11.6 Z" fill="#afb1b3"/></svg>
<div class="t" style="left:767px;top:112.84px;font-size:12px;line-height:20px;color:#bbbbbb;font-weight:normal;">AppTheme</div>
<svg style="left:827px;top:119px;" width="9" height="5" viewBox="0 0 9 5"><path d="M0,0 H9 L4.5,5 Z" fill="#afb1b3"/></svg>
<div style="left:847px;top:114px;width:1px;height:17px;background:#515151;"></div>
<div class="t" style="left:961px;top:111.50px;font-size:13px;line-height:20px;color:#bbbbbb;font-weight:normal;">&#8250;&#8250;</div>
<svg style="left:982px;top:114px;" width="16" height="16" viewBox="0 0 16 16"><circle cx="8" cy="8" r="6.8" stroke="#5e6163" stroke-width="1.3" fill="none"/><rect x="4" y="7.2" width="8" height="1.8" fill="#5e6163"/></svg>
<div class="t" style="left:1003px;top:112.84px;font-size:12px;line-height:20px;color:#bbbbbb;font-weight:normal;">27%</div>
<svg style="left:1033px;top:114px;" width="16" height="16" viewBox="0 0 16 16"><circle cx="8" cy="8" r="6.8" stroke="#cfcfcf" stroke-width="1.4" fill="none"/><rect x="4" y="7.1" width="8" height="1.9" fill="#cfcfcf"/><rect x="7.05" y="4" width="1.9" height="8" fill="#cfcfcf"/></svg>
<svg style="left:1059px;top:114px;" width="16" height="16" viewBox="0 0 16 16"><circle cx="8" cy="8" r="6.8" stroke="#5e6163" stroke-width="1.3" fill="none"/><rect x="5" y="5" width="6" height="6" fill="#5e6163"/><path d="M5,11 L11,5 V11 Z" fill="#4a4d4f"/></svg>
<div style="left:1083px;top:114px;width:1px;height:17px;background:#515151;"></div>
<svg style="left:1092px;top:114px;" width="16" height="16" viewBox="0 0 16 16"><circle cx="8" cy="8" r="7.5" fill="#9e9e9e"/><rect x="6.9" y="3.5" width="2.2" height="6" rx="0.8" fill="#3c3f41"/><circle cx="8" cy="11.8" r="1.2" fill="#3c3f41"/></svg>
<svg style="left:528px;top:144px;" width="18" height="12" viewBox="0 0 18 12"><path d="M1,6 C4,1 14,1 17,6 C14,11 4,11 1,6 Z" fill="#afb1b3"/><circle cx="9" cy="6" r="3.2" fill="#3c3f41"/><circle cx="9" cy="6" r="1.8" fill="#afb1b3"/></svg>
<svg style="left:547px;top:147px;" width="9" height="5" viewBox="0 0 9 5"><path d="M0,0 H9 L4.5,5 Z" fill="#afb1b3"/></svg>
<svg style="left:568px;top:142px;" width="17" height="18" viewBox="0 0 17 18"><path d="M1.8,6.8 V10 A6.2,6.2 0 0 0 14.2,10 V6.8 H10.9 V10 A2.9,2.9 0 0 1 5.1,10 V6.8 Z" fill="#afb1b3"/><rect x="1.8" y="3" width="3.3" height="3.2" fill="#3592c4"/><rect x="10.9" y="3" width="3.3" height="3.2" fill="#3592c4"/><path d="M1,2 L15,16" stroke="#3c3f41" stroke-width="2.6"/><path d="M1,2 L15,16" stroke="#afb1b3" stroke-width="1.1"/></svg>
<div style="left:592px;top:153px;width:1px;height:6px;background:#8f8f8f;"></div>
<div style="left:592px;top:158px;width:35px;height:1px;background:#8f8f8f;"></div>
<div style="left:626px;top:153px;width:1px;height:6px;background:#8f8f8f;"></div>
<div class="t" style="left:599px;top:141.02px;font-size:11.5px;line-height:20px;color:#b0b0b0;font-weight:normal;">0dp</div>
<div style="left:632px;top:141px;width:1px;height:20px;background:#515151;"></div>
<svg style="left:641px;top:142px;" width="16" height="16" viewBox="0 0 16 16"><path d="M2.5,13 C6,13 5,3 11,3" stroke="#afb1b3" stroke-width="1.4" fill="none"/><circle cx="2.5" cy="13" r="1.8" fill="#afb1b3"/><circle cx="11" cy="3" r="1.8" fill="#afb1b3"/><path d="M9.5,10 L14.5,15 M14.5,10 L9.5,15" stroke="#d84a4a" stroke-width="1.4"/></svg>
<svg style="left:667px;top:142px;" width="16" height="16" viewBox="0 0 16 16"><path d="M1.5,14.5 L10,6" stroke="#afb1b3" stroke-width="2.2"/><g stroke="#3592c4" stroke-width="1.1"><path d="M12,1 V4 M14.5,5.5 H11.5 M15,2 L13,4 M9,1.5 L10.5,3.5 M14.5,8.5 L13,7"/></g></svg>
<div style="left:691px;top:141px;width:1px;height:20px;background:#515151;"></div>
<svg style="left:701px;top:142px;" width="20" height="16" viewBox="0 0 20 16"><path d="M4,1 V6 M1.5,3.5 L4,1 L6.5,3.5 M4,15 V10 M1.5,12.5 L4,15 L6.5,12.5" stroke="#afb1b3" stroke-width="1.4" fill="none"/><rect x="8.5" y="1.5" width="8" height="3" fill="none" stroke="#afb1b3"/><rect x="8.5" y="6.5" width="8" height="3" fill="none" stroke="#afb1b3"/><rect x="8.5" y="11.5" width="8" height="3" fill="none" stroke="#afb1b3"/></svg>
<svg style="left:719px;top:147px;" width="9" height="5" viewBox="0 0 9 5"><path d="M0,0 H9 L4.5,5 Z" fill="#afb1b3"/></svg>
<svg style="left:742px;top:142px;" width="16" height="16" viewBox="0 0 16 16"><rect x="0.5" y="1" width="1.3" height="14" fill="#3592c4"/><rect x="3" y="3" width="7" height="4" fill="#afb1b3"/><rect x="3" y="9" width="11" height="4" fill="#afb1b3"/></svg>
<svg style="left:759px;top:147px;" width="9" height="5" viewBox="0 0 9 5"><path d="M0,0 H9 L4.5,5 Z" fill="#afb1b3"/></svg>
<svg style="left:782px;top:142px;" width="12" height="16" viewBox="0 0 12 16"><path d="M2,1.5 H10 M2,14.5 H10 M6,1.5 V14.5" stroke="#afb1b3" stroke-width="1.6"/><rect x="4.5" y="6" width="3" height="4" fill="#afb1b3"/></svg>
<svg style="left:799px;top:147px;" width="9" height="5" viewBox="0 0 9 5"><path d="M0,0 H9 L4.5,5 Z" fill="#afb1b3"/></svg>
<div style="left:521px;top:166px;width:594px;height:665px;background:#2d2f31;"></div>
<div style="left:668px;top:236px;width:299px;height:532px;background:#fafafa;"></div>
<svg style="left:0px;top:0px;" width="1373" height="861" viewBox="0 0 1373 861"><path d="M821.0,242.0 L814.0,245.2 L821.0,248.5 L814.0,251.8 L821.0,255.0 L814.0,258.2 L821.0,261.5 L814.0,264.8 L821.0,268.0 L814.0,271.2 L821.0,274.5 L814.0,277.8 L821.0,281.0 L814.0,284.2 L821.0,287.5 L814.0,290.8 L821.0,294.0 L814.0,297.2 L821.0,300.5 L814.0,303.8 L821.0,307.0 L814.0,310.2 L821.0,313.5 L814.0,316.8 L821.0,320.0 L814.0,323.2 L821.0,326.5 L814.0,329.8 L821.0,333.0 L814.0,336.2 L821.0,339.5 L814.0,342.8 L821.0,346.0 L814.0,349.2 L821.0,352.5 L814.0,355.8 L821.0,359.0 L814.0,362.2 L821.0,365.5 L814.0,368.8 L821.0,372.0 L814.0,375.2 L821.0,378.5 L814.0,381.8 L821.0,385.0 L814.0,388.2 L821.0,391.5 L814.0,394.8 L821.0,398.0 L814.0,401.2 L821.0,404.5 L814.0,407.8 L821.0,411.0 L814.0,414.2 L821.0,417.5 L814.0,420.8 L821.0,424.0 L814.0,427.2 L821.0,430.5 L814.0,433.8 L821.0,437.0 L814.0,440.2 L821.0,443.5 L814.0,446.8 L821.0,450.0 L814.0,453.2 L821.0,456.5 L814.0,459.8 L821.0,463.0 L814.0,466.2 L821.0,469.5 L814.0,472.8 L821.0,476.0 L814.0,479.2" stroke="#1a86f5" stroke-width="1.2" fill="none"/><path d="M821.0,523.0 L814.0,526.2 L821.0,529.5 L814.0,532.8 L821.0,536.0 L814.0,539.2 L821.0,542.5 L814.0,545.8 L821.0,549.0 L814.0,552.2 L821.0,555.5 L814.0,558.8 L821.0,562.0 L814.0,565.2 L821.0,568.5 L814.0,571.8 L821.0,575.0 L814.0,578.2 L821.0,581.5 L814.0,584.8 L821.0,588.0 L814.0,591.2 L821.0,594.5 L814.0,597.8 L821.0,601.0 L814.0,604.2 L821.0,607.5 L814.0,610.8 L821.0,614.0 L814.0,617.2 L821.0,620.5 L814.0,623.8 L821.0,627.0 L814.0,630.2 L821.0,633.5 L814.0,636.8 L821.0,640.0 L814.0,643.2 L821.0,646.5 L814.0,649.8 L821.0,653.0 L814.0,656.2 L821.0,659.5 L814.0,662.8 L821.0,666.0 L814.0,669.2 L821.0,672.5 L814.0,675.8 L821.0,679.0 L814.0,682.2 L821.0,685.5 L814.0,688.8 L821.0,692.0 L814.0,695.2 L821.0,698.5 L814.0,701.8 L821.0,705.0 L814.0,708.2 L821.0,711.5 L814.0,714.8 L821.0,718.0 L814.0,721.2 L821.0,724.5 L814.0,727.8 L821.0,731.0 L814.0,734.2 L821.0,737.5 L814.0,740.8 L821.0,744.0 L814.0,747.2 L821.0,750.5 L814.0,753.8 L821.0,757.0 L814.0,760.2" stroke="#1a86f5" stroke-width="1.2" fill="none"/><path d="M677.0,505.3 L680.2,498.7 L683.5,505.3 L686.8,498.7 L690.0,505.3 L693.2,498.7 L696.5,505.3 L699.8,498.7 L703.0,505.3 L706.2,498.7 L709.5,505.3 L712.8,498.7 L716.0,505.3 L719.2,498.7 L722.5,505.3 L725.8,498.7 L729.0,505.3 L732.2,498.7 L735.5,505.3 L738.8,498.7 L742.0,505.3 L745.2,498.7 L748.5,505.3 L751.8,498.7 L755.0,505.3 L758.2,498.7 L761.5,505.3 L764.8,498.7 L768.0,505.3 L771.2,498.7 L774.5,505.3 L777.8,498.7 L781.0,505.3" stroke="#1a86f5" stroke-width="1.2" fill="none"/><path d="M853.0,505.3 L856.2,498.7 L859.5,505.3 L862.8,498.7 L866.0,505.3 L869.2,498.7 L872.5,505.3 L875.8,498.7 L879.0,505.3 L882.2,498.7 L885.5,505.3 L888.8,498.7 L892.0,505.3 L895.2,498.7 L898.5,505.3 L901.8,498.7 L905.0,505.3 L908.2,498.7 L911.5,505.3 L914.8,498.7 L918.0,505.3 L921.2,498.7 L924.5,505.3 L927.8,498.7 L931.0,505.3 L934.2,498.7 L937.5,505.3 L940.8,498.7 L944.0,505.3 L947.2,498.7 L950.5,505.3 L953.8,498.7 L957.0,505.3" stroke="#1a86f5" stroke-width="1.2" fill="none"/><path d="M817.5,236 L812.5,242.5 L822.5,242.5 Z" fill="#1a86f5"/><path d="M817.5,768 L812.5,761.5 L822.5,761.5 Z" fill="#1a86f5"/><path d="M668,502 L674.5,497 L674.5,507 Z" fill="#1a86f5"/><path d="M967,502 L960.5,497 L960.5,507 Z" fill="#1a86f5"/><rect x="789.5" y="495.5" width="57" height="14" fill="none" stroke="#1a86f5" stroke-width="1"/><clipPath id="wc"><rect x="797" y="496" width="42" height="13"/></clipPath><text x="817.5" y="506" text-anchor="middle" font-family="Liberation Sans" font-size="10" fill="#656565" clip-path="url(#wc)">Hello World!</text><rect x="786.0" y="492.5" width="7" height="6" fill="#1a86f5"/><rect x="843.0" y="492.5" width="7" height="6" fill="#1a86f5"/><rect x="786.0" y="506.5" width="7" height="6" fill="#1a86f5"/><rect x="843.0" y="506.5" width="7" height="6" fill="#1a86f5"/><circle cx="817.5" cy="490" r="7" fill="#fafafa"/><circle cx="817.5" cy="490" r="5.8" fill="#1a86f5"/><circle cx="817.5" cy="513" r="7" fill="#fafafa"/><circle cx="817.5" cy="513" r="5.8" fill="#1a86f5"/><circle cx="789.5" cy="502.5" r="7" fill="#fafafa"/><circle cx="789.5" cy="502.5" r="5.8" fill="#1a86f5"/><circle cx="846.5" cy="502.5" r="7" fill="#fafafa"/><circle cx="846.5" cy="502.5" r="5.8" fill="#1a86f5"/><path d="M971.5,789 L988.5,772 M979.5,789 L988.5,780" stroke="#8a8a8a" stroke-width="1"/></svg>
<div style="left:1115px;top:108px;width:1px;height:723px;background:#2b2b2b;"></div>
<div style="left:1116px;top:108px;width:252px;height:723px;background:#313335;"></div>
<div style="left:1116px;top:108px;width:252px;height:28px;background:#3c3f41;"></div>
<div style="left:1116px;top:136px;width:252px;height:1px;background:#2b2b2b;"></div>
<div class="t" style="left:1121px;top:112.84px;font-size:12px;line-height:20px;color:#bbbbbb;font-weight:normal;">Attributes</div>
<svg style="left:1295px;top:114px;" width="16" height="16" viewBox="0 0 16 16"><circle cx="6.5" cy="6.5" r="4.8" stroke="#afb1b3" stroke-width="1.7" fill="none"/><path d="M10,10 L14.5,14.5" stroke="#afb1b3" stroke-width="2"/></svg>
<svg style="left:1321px;top:114px;" width="16" height="16" viewBox="0 0 16 16"><g fill="#afb1b3"><rect x="6.4" y="1.5" width="3.2" height="3" transform="rotate(0 8 8)"/><rect x="6.4" y="1.5" width="3.2" height="3" transform="rotate(45 8 8)"/><rect x="6.4" y="1.5" width="3.2" height="3" transform="rotate(90 8 8)"/><rect x="6.4" y="1.5" width="3.2" height="3" transform="rotate(135 8 8)"/><rect x="6.4" y="1.5" width="3.2" height="3" transform="rotate(180 8 8)"/><rect x="6.4" y="1.5" width="3.2" height="3" transform="rotate(225 8 8)"/><rect x="6.4" y="1.5" width="3.2" height="3" transform="rotate(270 8 8)"/><rect x="6.4" y="1.5" width="3.2" height="3" transform="rotate(315 8 8)"/><circle cx="8" cy="8" r="4.7"/></g><circle cx="8" cy="8" r="1.8" fill="#3c3f41"/></svg>
<div style="left:1348px;top:121px;width:13px;height:2px;background:#afb1b3;"></div>
<div class="t" style="left:1125px;top:138.84px;font-size:12px;line-height:20px;color:#9a9da0;font-weight:normal;letter-spacing:-0.3px">Ab</div>
<div class="t" style="left:1143px;top:139.84px;font-size:12px;line-height:20px;color:#bbbbbb;font-weight:normal;">&lt;unnamed&gt;</div>
<div class="t" style="left:1362px;top:139.84px;font-size:12px;line-height:20px;color:#787878;font-weight:normal;transform:translateX(-100%)">TextView</div>
<div class="t" style="left:1124px;top:167.84px;font-size:12px;line-height:20px;color:#bbbbbb;font-weight:normal;">id</div>
<div style="left:1219px;top:168px;width:129px;height:16px;border:1px solid #626567;background:#2e3032"></div>
<div style="left:1116px;top:192px;width:252px;height:1px;background:#2b2b2b;"></div>
<div style="left:1116px;top:193px;width:252px;height:24px;background:#3c3f41;"></div>
<div style="left:1116px;top:217px;width:252px;height:1px;background:#2b2b2b;"></div>
<svg style="left:1124px;top:201px;" width="8" height="9" viewBox="0 0 8 9"><path d="M0,0 V9 L7.5,4.5 Z" fill="#a3a3a3"/></svg>
<div class="t" style="left:1135px;top:195.84px;font-size:12px;line-height:20px;color:#bbbbbb;font-weight:bold;">Declared Attributes</div>
<svg style="left:1322px;top:199px;" width="12" height="12" viewBox="0 0 12 12"><rect x="0" y="5.2" width="12" height="1.6" fill="#afb1b3"/><rect x="5.2" y="0" width="1.6" height="12" fill="#afb1b3"/></svg>
<div style="left:1348px;top:204px;width:12px;height:2px;background:#afb1b3;"></div>
<div style="left:1116px;top:218px;width:252px;height:24px;background:#3c3f41;"></div>
<div style="left:1116px;top:242px;width:252px;height:1px;background:#2b2b2b;"></div>
<svg style="left:1124px;top:227px;" width="9" height="8" viewBox="0 0 9 8"><path d="M0,0 H9 L4.5,8 Z" fill="#a3a3a3"/></svg>
<div class="t" style="left:1135px;top:220.84px;font-size:12px;line-height:20px;color:#bbbbbb;font-weight:bold;">Layout</div>
<div class="t" style="left:1124px;top:247.84px;font-size:12px;line-height:20px;color:#bbbbbb;font-weight:normal;">Constraint Widget</div>
<svg style="left:0px;top:0px;" width="1373" height="861" viewBox="0 0 1373 861"><rect x="1129" y="303" width="5" height="102" rx="2.5" fill="#242526"/><rect x="1191" y="428" width="102" height="5" rx="2.5" fill="#242526"/><rect x="1212.5" y="324.5" width="60" height="60" fill="none" stroke="#8c8c8c" stroke-width="1"/><rect x="1212" y="287" width="60" height="25" fill="#3a3d3f"/><rect x="1215.5" y="290.5" width="53" height="18" rx="2" fill="#45494a" stroke="#5f6366" stroke-width="1"/><rect x="1246" y="291" width="1" height="17" fill="#5f6366"/><path d="M1253,297 H1262 L1257.5,302 Z" fill="#afb1b3"/><text x="1220" y="304" font-family="Liberation Sans" font-size="12" fill="#9fb8d0">0</text><rect x="1140" y="341" width="60" height="25" fill="#3a3d3f"/><rect x="1143.5" y="344.5" width="53" height="18" rx="2" fill="#45494a" stroke="#5f6366" stroke-width="1"/><rect x="1174" y="345" width="1" height="17" fill="#5f6366"/><path d="M1181,351 H1190 L1185.5,356 Z" fill="#afb1b3"/><text x="1148" y="358" font-family="Liberation Sans" font-size="12" fill="#9fb8d0">0</text><rect x="1284" y="341" width="60" height="25" fill="#3a3d3f"/><rect x="1287.5" y="344.5" width="53" height="18" rx="2" fill="#45494a" stroke="#5f6366" stroke-width="1"/><rect x="1318" y="345" width="1" height="17" fill="#5f6366"/><path d="M1325,351 H1334 L1329.5,356 Z" fill="#afb1b3"/><text x="1292" y="358" font-family="Liberation Sans" font-size="12" fill="#9fb8d0">0</text><rect x="1212" y="396" width="60" height="25" fill="#3a3d3f"/><rect x="1215.5" y="399.5" width="53" height="18" rx="2" fill="#45494a" stroke="#5f6366" stroke-width="1"/><rect x="1246" y="400" width="1" height="17" fill="#5f6366"/><path d="M1253,406 H1262 L1257.5,411 Z" fill="#afb1b3"/><text x="1220" y="413" font-family="Liberation Sans" font-size="12" fill="#9fb8d0">0</text><path d="M1242.5,312 V324 M1242.5,385 V396 M1200,354.5 H1212 M1273,354.5 H1284" stroke="#8c8c8c" stroke-width="2"/><circle cx="1242.5" cy="324" r="5" fill="#8c8c8c"/><circle cx="1242.5" cy="384.5" r="5" fill="#8c8c8c"/><circle cx="1212.5" cy="354.5" r="5" fill="#8c8c8c"/><circle cx="1272.5" cy="354.5" r="5" fill="#8c8c8c"/><path d="M1237,333 L1242,338 L1247,333 M1237,338 L1242,343 L1247,338" stroke="#8c8c8c" fill="none" stroke-width="1"/><path d="M1237,376 L1242,371 L1247,376 M1237,371 L1242,366 L1247,371" stroke="#8c8c8c" fill="none" stroke-width="1"/><path d="M1221,349 L1226,354 L1221,359 M1226,349 L1231,354 L1226,359" stroke="#8c8c8c" fill="none" stroke-width="1"/><path d="M1263,349 L1258,354 L1263,359 M1258,349 L1253,354 L1258,359" stroke="#8c8c8c" fill="none" stroke-width="1"/><circle cx="1131" cy="354" r="8.5" fill="#3a3d3f" stroke="#5f6366" stroke-width="1"/><text x="1131" y="358" text-anchor="middle" font-family="Liberation Sans" font-size="10" fill="#6e7275">50</text><circle cx="1241.5" cy="430" r="8.5" fill="#3a3d3f" stroke="#5f6366" stroke-width="1"/><text x="1241.5" y="434" text-anchor="middle" font-family="Liberation Sans" font-size="10" fill="#6e7275">50</text></svg>
<svg style="left:1127px;top:468px;" width="9" height="10" viewBox="0 0 9 10"><path d="M0.5,0 V9.5 L8.5,4.75 Z" fill="#a3a3a3"/></svg>
<div class="t" style="left:1140px;top:462.84px;font-size:12px;line-height:20px;color:#bbbbbb;font-weight:normal;">Constraints <span style="color:#9a9a9a">(4)</span></div>
<div style="left:1120px;top:487px;width:243px;height:1px;background:#4a4d4f;"></div>
<div class="t" style="left:1124px;top:495.84px;font-size:12px;line-height:20px;color:#bbbbbb;font-weight:normal;">layout_width</div>
<div style="left:1219px;top:496px;width:129px;height:16px;border:1px solid #626567;border-radius:3px;background:#2e3032;overflow:hidden"></div>
<div style="left:1328px;top:497px;width:20px;height:16px;background:#393c3e;border-radius:0 2px 2px 0"></div>
<div style="left:1327px;top:497px;width:1px;height:16px;background:#5f6264;"></div>
<svg style="left:1334px;top:503px;" width="9" height="6" viewBox="0 0 9 6"><path d="M0,0 H9 L4.5,5 Z" fill="#afb1b3"/></svg>
<div class="t" style="left:1224px;top:495.84px;font-size:12px;line-height:20px;color:#bbbbbb;font-weight:normal;width:100px;overflow:hidden">wrap_content</div>
<div style="left:1357px;top:497px;width:3px;height:14px;border:1px solid #9a9a9a;border-radius:3px"></div>
<div class="t" style="left:1124px;top:519.84px;font-size:12px;line-height:20px;color:#bbbbbb;font-weight:normal;">layout_height</div>
<div style="left:1219px;top:520px;width:129px;height:16px;border:1px solid #626567;border-radius:3px;background:#2e3032;overflow:hidden"></div>
<div style="left:1328px;top:521px;width:20px;height:16px;background:#393c3e;border-radius:0 2px 2px 0"></div>
<div style="left:1327px;top:521px;width:1px;height:16px;background:#5f6264;"></div>
<svg style="left:1334px;top:527px;" width="9" height="6" viewBox="0 0 9 6"><path d="M0,0 H9 L4.5,5 Z" fill="#afb1b3"/></svg>
<div class="t" style="left:1224px;top:519.84px;font-size:12px;line-height:20px;color:#bbbbbb;font-weight:normal;width:100px;overflow:hidden">wrap_content</div>
<div style="left:1357px;top:521px;width:3px;height:14px;border:1px solid #9a9a9a;border-radius:3px"></div>
<div class="t" style="left:1124px;top:543.84px;font-size:12px;line-height:20px;color:#bbbbbb;font-weight:normal;">visibility</div>
<div style="left:1219px;top:544px;width:129px;height:16px;border:1px solid #626567;border-radius:3px;background:#2e3032;overflow:hidden"></div>
<div style="left:1328px;top:545px;width:20px;height:16px;background:#393c3e;border-radius:0 2px 2px 0"></div>
<div style="left:1327px;top:545px;width:1px;height:16px;background:#5f6264;"></div>
<svg style="left:1334px;top:551px;" width="9" height="6" viewBox="0 0 9 6"><path d="M0,0 H9 L4.5,5 Z" fill="#afb1b3"/></svg>
<svg style="left:1123px;top:572px;" width="11" height="11" viewBox="0 0 11 11"><path d="M1.5,9.5 L6,5" stroke="#afb1b3" stroke-width="2.4" stroke-linecap="round"/><path d="M5,5.5 A3.6,3.6 0 0 1 9.5,0.8 L7.5,2.8 L8.3,3.8 L10.3,1.8 A3.6,3.6 0 0 1 5.8,6.2 Z" fill="#afb1b3"/></svg>
<div class="t" style="left:1136px;top:567.84px;font-size:12px;line-height:20px;color:#bbbbbb;font-weight:normal;">visibility</div>
<div style="left:1219px;top:568px;width:129px;height:16px;border:1px solid #626567;border-radius:3px;background:#2e3032;overflow:hidden"></div>
<div style="left:1328px;top:569px;width:20px;height:16px;background:#393c3e;border-radius:0 2px 2px 0"></div>
<div style="left:1327px;top:569px;width:1px;height:16px;background:#5f6264;"></div>
<svg style="left:1334px;top:575px;" width="9" height="6" viewBox="0 0 9 6"><path d="M0,0 H9 L4.5,5 Z" fill="#afb1b3"/></svg>
<div style="left:1116px;top:593px;width:252px;height:24px;background:#3c3f41;"></div>
<div style="left:1116px;top:617px;width:252px;height:1px;background:#2b2b2b;"></div>
<svg style="left:1124px;top:602px;" width="9" height="8" viewBox="0 0 9 8"><path d="M0,0 H9 L4.5,8 Z" fill="#a3a3a3"/></svg>
<div class="t" style="left:1135px;top:595.84px;font-size:12px;line-height:20px;color:#bbbbbb;font-weight:bold;">Common Attributes</div>
<div class="t" style="left:1124px;top:624.84px;font-size:12px;line-height:20px;color:#bbbbbb;font-weight:normal;">text</div>
<div style="left:1219px;top:625px;width:129px;height:16px;border:1px solid #626567;border-radius:3px;background:#2e3032;overflow:hidden"></div>
<div class="t" style="left:1224px;top:624.84px;font-size:12px;line-height:20px;color:#bbbbbb;font-weight:normal;width:124px;overflow:hidden">Hello World!</div>
<div style="left:1357px;top:626px;width:3px;height:14px;border:1px solid #9a9a9a;border-radius:3px"></div>
<svg style="left:1123px;top:653px;" width="11" height="11" viewBox="0 0 11 11"><path d="M1.5,9.5 L6,5" stroke="#afb1b3" stroke-width="2.4" stroke-linecap="round"/><path d="M5,5.5 A3.6,3.6 0 0 1 9.5,0.8 L7.5,2.8 L8.3,3.8 L10.3,1.8 A3.6,3.6 0 0 1 5.8,6.2 Z" fill="#afb1b3"/></svg>
<div class="t" style="left:1136px;top:648.84px;font-size:12px;line-height:20px;color:#bbbbbb;font-weight:normal;">text</div>
<div style="left:1219px;top:649px;width:129px;height:16px;border:1px solid #626567;border-radius:3px;background:#2e3032;overflow:hidden"></div>
<div style="left:1357px;top:650px;width:3px;height:14px;border:1px solid #9a9a9a;border-radius:3px"></div>
<div class="t" style="left:1124px;top:672.84px;font-size:12px;line-height:20px;color:#bbbbbb;font-weight:normal;">contentDescript...</div>
<div style="left:1219px;top:673px;width:129px;height:16px;border:1px solid #626567;border-radius:3px;background:#2e3032;overflow:hidden"></div>
<div style="left:1357px;top:674px;width:3px;height:14px;border:1px solid #9a9a9a;border-radius:3px"></div>
<svg style="left:1124px;top:701px;" width="9" height="10" viewBox="0 0 9 10"><path d="M0.5,0 V9.5 L8.5,4.75 Z" fill="#a3a3a3"/></svg>
<div class="t" style="left:1135px;top:696.84px;font-size:12px;line-height:20px;color:#bbbbbb;font-weight:normal;">textAppearance</div>
<div style="left:1219px;top:697px;width:129px;height:16px;border:1px solid #626567;border-radius:3px;background:#2e3032;overflow:hidden"></div>
<div style="left:1328px;top:698px;width:20px;height:16px;background:#393c3e;border-radius:0 2px 2px 0"></div>
<div style="left:1327px;top:698px;width:1px;height:16px;background:#5f6264;"></div>
<svg style="left:1334px;top:704px;" width="9" height="6" viewBox="0 0 9 6"><path d="M0,0 H9 L4.5,5 Z" fill="#afb1b3"/></svg>
<div class="t" style="left:1224px;top:696.84px;font-size:12px;line-height:20px;color:#a0a0a0;font-weight:normal;width:100px;overflow:hidden">@android:style/Te</div>
<div style="left:1357px;top:698px;width:3px;height:14px;border:1px solid #9a9a9a;border-radius:3px"></div>
<div class="t" style="left:1124px;top:720.84px;font-size:12px;line-height:20px;color:#bbbbbb;font-weight:normal;">alpha</div>
<div style="left:1219px;top:721px;width:129px;height:16px;border:1px solid #626567;border-radius:3px;background:#2e3032;overflow:hidden"></div>
<div style="left:1357px;top:722px;width:3px;height:14px;border:1px solid #9a9a9a;border-radius:3px"></div>
<div style="left:1116px;top:746px;width:252px;height:24px;background:#3c3f41;"></div>
<div style="left:1116px;top:770px;width:252px;height:1px;background:#2b2b2b;"></div>
<svg style="left:1124px;top:754px;" width="8" height="9" viewBox="0 0 8 9"><path d="M0,0 V9 L7.5,4.5 Z" fill="#a3a3a3"/></svg>
<div class="t" style="left:1135px;top:748.84px;font-size:12px;line-height:20px;color:#bbbbbb;font-weight:bold;">All Attributes</div>
<div style="left:1368px;top:84px;width:1px;height:773px;background:#4a4a4a;"></div>
<div style="left:1369px;top:84px;width:4px;height:762px;background:#3c3f41;"></div>
<div style="left:1369px;top:846px;width:4px;height:15px;background:#333537;"></div>
<div style="left:296px;top:831px;width:1072px;height:1px;background:#2b2b2b;"></div>
<div style="left:296px;top:832px;width:1072px;height:5px;background:#4e5254;"></div>
<div style="left:296px;top:837px;width:1072px;height:20px;background:#3c3f41;"></div>
<div style="left:305px;top:837px;width:56px;height:20px;background:#4e5254;"></div>
<div style="left:411px;top:837px;width:1px;height:20px;background:#2f3133;"></div>
<div class="t" style="left:315px;top:835.84px;font-size:12px;line-height:20px;color:#bbbbbb;font-weight:normal;">Design</div>
<div class="t" style="left:375px;top:835.84px;font-size:12px;line-height:20px;color:#bbbbbb;font-weight:normal;">Text</div>
<div style="left:6px;top:857px;width:1367px;height:1px;background:#2b2b2b;"></div>
<div style="left:28px;top:858px;width:1345px;height:3px;background:#3c3f41;"></div>
<svg style="left:0px;top:0px;" width="1373" height="861" viewBox="0 0 1373 861"><defs><linearGradient id="rg" x1="0" y1="0" x2="1" y2="1"><stop offset="0" stop-color="#ff0000"/><stop offset="1" stop-color="#e40000"/></linearGradient></defs><path d="M436.9,82.3 L468.5,87.7 L461.8,82.0 L501.5,64.3 L501.4,64.0 L458.3,69.6 L461.1,61.1Z" fill="#1a1a1a" opacity="0.35" transform="translate(0.8,1)" stroke="#1a1a1a" stroke-width="3.4" stroke-linejoin="round"/><path d="M436.9,82.3 L468.5,87.7 L461.8,82.0 L501.5,64.3 L501.4,64.0 L458.3,69.6 L461.1,61.1Z" fill="url(#rg)" stroke="url(#rg)" stroke-width="2.8" stroke-linejoin="round"/><path d="M537.3,87.0 L558.6,86.2 L553.3,83.4 L577.3,66.5 L577.2,66.1 L549.4,75.9 L550.2,70.1Z" fill="#1a1a1a" opacity="0.35" transform="translate(0.8,1)" stroke="#1a1a1a" stroke-width="3.4" stroke-linejoin="round"/><path d="M537.3,87.0 L558.6,86.2 L553.3,83.4 L577.3,66.5 L577.2,66.1 L549.4,75.9 L550.2,70.1Z" fill="url(#rg)" stroke="url(#rg)" stroke-width="2.8" stroke-linejoin="round"/><path d="M197.3,195.2 L223.7,189.0 L216.5,186.8 L241.8,159.8 L241.6,159.5 L209.7,178.3 L209.1,170.8Z" fill="#1a1a1a" opacity="0.35" transform="translate(0.8,1)" stroke="#1a1a1a" stroke-width="3.4" stroke-linejoin="round"/><path d="M197.3,195.2 L223.7,189.0 L216.5,186.8 L241.8,159.8 L241.6,159.5 L209.7,178.3 L209.1,170.8Z" fill="url(#rg)" stroke="url(#rg)" stroke-width="2.8" stroke-linejoin="round"/><path d="M296.3,135.3 L280.1,145.7 L285.4,145.4 L274.3,169.8 L274.7,170.0 L291.9,149.5 L294.0,154.4Z" fill="#1a1a1a" opacity="0.35" transform="translate(0.8,1)" stroke="#1a1a1a" stroke-width="3.4" stroke-linejoin="round"/><path d="M296.3,135.3 L280.1,145.7 L285.4,145.4 L274.3,169.8 L274.7,170.0 L291.9,149.5 L294.0,154.4Z" fill="url(#rg)" stroke="url(#rg)" stroke-width="2.8" stroke-linejoin="round"/><path d="M20.0,140.2 L20.2,159.3 L22.8,154.6 L37.6,176.7 L37.9,176.5 L29.6,151.3 L34.9,152.2Z" fill="#1a1a1a" opacity="0.35" transform="translate(0.8,1)" stroke="#1a1a1a" stroke-width="3.4" stroke-linejoin="round"/><path d="M20.0,140.2 L20.2,159.3 L22.8,154.6 L37.6,176.7 L37.9,176.5 L29.6,151.3 L34.9,152.2Z" fill="url(#rg)" stroke="url(#rg)" stroke-width="2.8" stroke-linejoin="round"/><path d="M1125.0,130.0 L1104.4,143.8 L1111.3,143.3 L1098.1,174.6 L1098.4,174.8 L1119.7,148.4 L1122.6,154.6Z" fill="#1a1a1a" opacity="0.35" transform="translate(0.8,1)" stroke="#1a1a1a" stroke-width="3.4" stroke-linejoin="round"/><path d="M1125.0,130.0 L1104.4,143.8 L1111.3,143.3 L1098.1,174.6 L1098.4,174.8 L1119.7,148.4 L1122.6,154.6Z" fill="url(#rg)" stroke="url(#rg)" stroke-width="2.8" stroke-linejoin="round"/><path d="M208.7,329.7 L232.4,323.9 L225.9,322.0 L248.7,297.5 L248.5,297.2 L219.8,314.5 L219.2,307.7Z" fill="#1a1a1a" opacity="0.35" transform="translate(0.8,1)" stroke="#1a1a1a" stroke-width="3.4" stroke-linejoin="round"/><path d="M208.7,329.7 L232.4,323.9 L225.9,322.0 L248.7,297.5 L248.5,297.2 L219.8,314.5 L219.2,307.7Z" fill="url(#rg)" stroke="url(#rg)" stroke-width="2.8" stroke-linejoin="round"/></svg>
</body></html>
